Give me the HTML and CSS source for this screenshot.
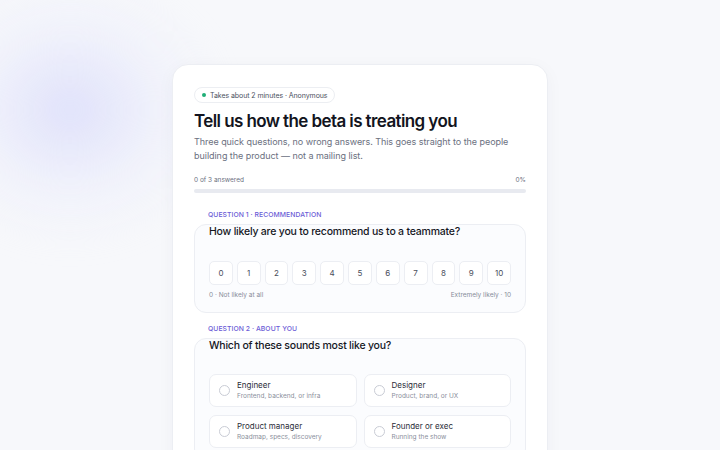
FILE: index.html
```html
<!DOCTYPE html>
<html lang="en">
<head>
    <meta charset="UTF-8">
    <meta name="viewport" content="width=device-width, initial-scale=1.0">
    <title>Beta feedback</title>
    <link rel="stylesheet" href="styles.css">
</head>
<body>
    <div class="glow"></div>
    <main class="card">
        <div class="pill"><span class="dot"></span>Takes about 2 minutes · Anonymous</div>
        <h1>Tell us how the beta is treating you</h1>
        <p class="lead">Three quick questions, no wrong answers. This goes straight to the people building the product — not a mailing list.</p>

        <div class="progress-head">
            <span>0 of 3 answered</span>
            <span>0%</span>
        </div>
        <div class="progress"><div class="progress-fill" style="width:0%"></div></div>

        <section class="question">
            <div class="q-label">Question 1 · Recommendation</div>
            <div class="q-box">
                <h2>How likely are you to recommend us to a teammate?</h2>
                <div class="scale">
                    <button>0</button><button>1</button><button>2</button><button>3</button>
                    <button>4</button><button>5</button><button>6</button><button>7</button>
                    <button>8</button><button>9</button><button>10</button>
                </div>
                <div class="scale-ends">
                    <span>0 · Not likely at all</span>
                    <span>Extremely likely · 10</span>
                </div>
            </div>
        </section>

        <section class="question">
            <div class="q-label">Question 2 · About you</div>
            <div class="q-box">
                <h2>Which of these sounds most like you?</h2>
                <div class="options">
                    <label class="option">
                        <span class="radio"></span>
                        <span class="opt-text"><b>Engineer</b><small>Frontend, backend, or infra</small></span>
                    </label>
                    <label class="option">
                        <span class="radio"></span>
                        <span class="opt-text"><b>Designer</b><small>Product, brand, or UX</small></span>
                    </label>
                    <label class="option">
                        <span class="radio"></span>
                        <span class="opt-text"><b>Product manager</b><small>Roadmap, specs, discovery</small></span>
                    </label>
                    <label class="option">
                        <span class="radio"></span>
                        <span class="opt-text"><b>Founder or exec</b><small>Running the show</small></span>
                    </label>
                </div>
            </div>
        </section>
    </main>
</body>
</html>
```

FILE: styles.css
```css
* {
    box-sizing: border-box;
}
html, body {
    height: 100%;
}
body {
    margin: 0;
    background: #f7f8fb;
    font-family: Inter, "Noto Sans", sans-serif;
    color: #14161f;
    overflow: hidden;
    position: relative;
}
.glow {
    position: absolute;
    left: -90px;
    top: -30px;
    width: 320px;
    height: 280px;
    border-radius: 50%;
    background: radial-gradient(closest-side, rgba(214, 216, 250, 0.7), rgba(232, 234, 252, 0.35) 60%, rgba(247, 248, 251, 0));
    filter: blur(12px);
}
.card {
    position: relative;
    width: 376px;
    margin: 64px auto 0;
    background: #fff;
    border: 1px solid #eceef3;
    border-radius: 16px;
    box-shadow: 0 4px 18px rgba(30, 40, 80, 0.04);
    padding: 22px 21px 30px;
}
.pill {
    display: flex;
    align-items: center;
    gap: 3px;
    width: fit-content;
    height: 16px;
    padding: 0 7px;
    border: 1px solid #eceef2;
    border-radius: 999px;
    font-size: 7px;
    letter-spacing: -0.01em;
    color: #4b5160;
}
.dot {
    width: 4px;
    height: 4px;
    margin-right: 1px;
    border-radius: 50%;
    background: #1fae76;
}
h1 {
    margin: 6px 0 0;
    font-size: 17px;
    line-height: 24px;
    font-weight: 600;
    letter-spacing: -0.035em;
    color: #121420;
}
.lead {
    margin: 2px 0 0;
    font-size: 9px;
    line-height: 14px;
    letter-spacing: -0.005em;
    color: #6b7080;
}
.progress-head {
    display: flex;
    justify-content: space-between;
    margin-top: 12px;
    font-size: 6.5px;
    line-height: 10px;
    color: #6b7080;
}
.progress {
    margin-top: 4px;
    height: 4px;
    border-radius: 4px;
    background: #e8eaf0;
}
.progress-fill {
    height: 100%;
    border-radius: 4px;
    background: #6b5bd6;
}
.question {
    margin-top: 17px;
}
.question + .question {
    margin-top: 11px;
}
.q-label {
    padding-left: 14px;
    font-size: 6.8px;
    line-height: 10px;
    font-weight: 500;
    letter-spacing: 0.01em;
    text-transform: uppercase;
    color: #6b5bd6;
}
.q-box {
    margin-top: 4px;
    padding: 0 14px 12px;
    border: 1px solid #eceef3;
    border-radius: 12px;
    background: #fbfcfe;
}
h2 {
    margin: 0;
    font-size: 10.5px;
    line-height: 13px;
    font-weight: 500;
    letter-spacing: -0.02em;
    color: #16181f;
}
.scale {
    display: flex;
    gap: 4px;
    margin-top: 23px;
}
.scale button {
    width: 24px;
    height: 24px;
    padding: 0;
    border: 1px solid #eceef3;
    border-radius: 5px;
    background: #fff;
    font-family: inherit;
    font-size: 8px;
    color: #4a4e5c;
}
.scale-ends {
    display: flex;
    justify-content: space-between;
    margin-top: 5px;
    font-size: 6.5px;
    line-height: 10px;
    color: #878c99;
}
.options {
    display: grid;
    grid-template-columns: 1fr 1fr;
    gap: 8px 7px;
    margin-top: 22px;
}
.option {
    display: flex;
    align-items: center;
    gap: 7px;
    height: 33px;
    padding: 0 9px;
    border: 1px solid #eceef3;
    border-radius: 7px;
    background: #fff;
}
.radio {
    width: 11px;
    height: 11px;
    border: 1px solid #c9ccd5;
    border-radius: 50%;
    flex-shrink: 0;
}
.opt-text {
    display: flex;
    flex-direction: column;
}
.opt-text b {
    font-weight: 400;
    font-size: 8px;
    line-height: 11px;
    color: #2a2d38;
}
.opt-text small {
    font-size: 6.5px;
    line-height: 10px;
    color: #8a8f9c;
}
```
